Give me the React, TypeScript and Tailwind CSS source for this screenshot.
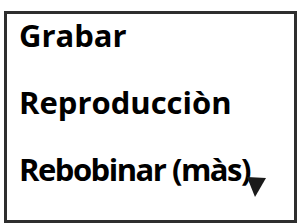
export default function App() {
  const items = ["Grabar", "Reproducciòn", "Rebobinar (màs)"];
  return (
    <div className="h-[223px] w-[301px] overflow-hidden bg-white pl-[4px] pr-[4px] pt-[11px]">
      <div
        className="flex h-[212px] flex-col gap-[34px] border-[3px] border-[#2e2e2e] pl-[12px] pt-[5px] text-[31px] font-bold leading-[33px] text-black"
        style={{ fontFamily: '"Open Sans", sans-serif' }}
      >
        {items.map((label, i) => {
          const last = i === items.length - 1;
          return (
            <div key={label} className="flex items-end">
              <span className={last ? "tracking-[-1.5px]" : ""}>{label}</span>
              {last && (
                <svg width="19" height="21" viewBox="0 0 19 21" className="mb-[-11px] ml-[-3px]">
                  <polygon points="0,1 19,2 8,21" fill="#1a1a1a" />
                </svg>
              )}
            </div>
          );
        })}
      </div>
    </div>
  );
}
